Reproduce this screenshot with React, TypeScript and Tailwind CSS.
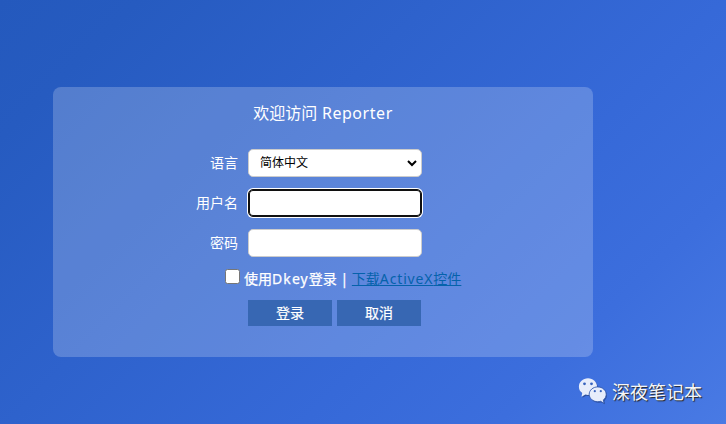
import React from "react";

const fieldBox =
  "h-7 w-[174px] rounded-[5px] border bg-white outline-none";

function Row({ label, children }: { label: string; children: React.ReactNode }) {
  return (
    <div className="flex h-7 items-center">
      <label className="w-[185px] text-right leading-5">{label}</label>
      <div className="ml-[10px] flex">{children}</div>
    </div>
  );
}

function ChatLogo() {
  return (
    <svg width="29" height="27" viewBox="0 0 29 27" className="shrink-0 overflow-visible">
      <g fill="#28458a" opacity="0.75" transform="translate(1 1)">
        <path d="M10 .8C5 .8 1 4.300 1 9c0 2.600 1.200 4.700 3.100 6.100l-.6 3.600 3.700-2c.9.200 1.800.3 2.800.3 5 0 9-3.500 9-8.100S15 .8 10 .8z" />
        <ellipse cx="19.800" cy="16.600" rx="8.200" ry="7.200" />
        <path d="M22 23l4 2.200-.9-4z" />
      </g>
      <path
        fill="#e7edfb"
        d="M10 .3C4.900.3.900 4 .9 8.700c0 2.700 1.300 4.900 3.300 6.300l-.7 3.700 3.900-2.100c.8.200 1.700.3 2.600.3 5.100 0 9.100-3.700 9.100-8.200S15.100.3 10 .3z"
      />
      <path
        fill="#e7edfb"
        stroke="#3158ae"
        strokeWidth="0.9"
        d="M19.700 8.900c-4.700 0-8.500 3.300-8.500 7.400s3.800 7.400 8.500 7.400c1 0 2-.1 2.900-.4l3.500 2-.8-3.400c1.800-1.300 2.900-3.300 2.900-5.600 0-4.100-3.800-7.400-8.500-7.400z"
      />
      <g fill="#3763bd">
        <circle cx="6.500" cy="5.800" r="1.400" />
        <circle cx="13.500" cy="5.800" r="1.400" />
        <circle cx="16.800" cy="13.200" r="1.100" />
        <circle cx="22.800" cy="13.200" r="1.100" />
      </g>
    </svg>
  );
}

export default function App() {
  return (
    <div className="flex h-[424px] w-[726px] flex-col overflow-hidden bg-[linear-gradient(135deg,#2459bd_0%,#265bc0_12%,#3669d8_63%,#3c6edd_80%,#497ae4_100%)] pt-[87px] font-['Noto_Sans','Noto_Sans_CJK_SC',sans-serif] text-sm text-white">
      <main className="ml-[53px] flex h-[270px] w-[540px] shrink-0 flex-col rounded-lg bg-white/[0.21] pt-[14px]">
        <h1 className="text-center text-base leading-6">
          欢迎访问<span className="tracking-[0.55px]"> Reporter</span>
        </h1>
        <form className="mt-6 flex flex-col gap-3" onSubmit={(e) => e.preventDefault()}>
          <Row label="语言">
            <div className={`flex items-center justify-between border-[#ccc] pl-[11px] pr-1 text-xs text-black ${fieldBox}`}>
              <span>简体中文</span>
              <svg width="10" height="8" viewBox="0 0 10 8" fill="none" stroke="#000" strokeWidth="2">
                <path d="M1 2l4 4 4-4" />
              </svg>
            </div>
          </Row>
          <Row label="用户名">
            <input
              className={`${fieldBox} border-[#101010] px-2 text-xs text-black shadow-[inset_0_0_0_1px_#101010,0_0_0_1px_#fff]`}
            />
          </Row>
          <Row label="密码">
            <input type="password" className={`${fieldBox} border-[#ccc] px-2 text-xs text-black`} />
          </Row>
          <div className="flex h-5 items-center pl-[172px]">
            <input
              type="checkbox"
              className="mb-[5px] h-[15px] w-[15px] appearance-none rounded-[2.5px] border border-[#767676] bg-white"
            />
            <span className="ml-1 whitespace-pre [-webkit-text-stroke:0.25px_white]">
              使用<span className="tracking-[1.1px]">Dkey</span>登录 |{" "}
            </span>
            <a className="text-[#0562ab] underline" href="#">
              下载<span className="tracking-[0.85px]">ActiveX</span>控件
            </a>
          </div>
          <div className="-mt-[1px] flex gap-[5px] pl-[195px] [-webkit-text-stroke:0.2px_white]">
            <button className="h-[26px] w-[84px] bg-[#3767b3]">登录</button>
            <button className="h-[26px] w-[84px] bg-[#3767b3]">取消</button>
          </div>
        </form>
      </main>
      <footer className="mt-[21px] flex items-center gap-[5px] pl-[578px]">
        <ChatLogo />
        <span className="text-[18px] leading-6 text-[#f6f6f6] [text-shadow:1px_1px_1px_#222]">深夜笔记本</span>
      </footer>
    </div>
  );
}
